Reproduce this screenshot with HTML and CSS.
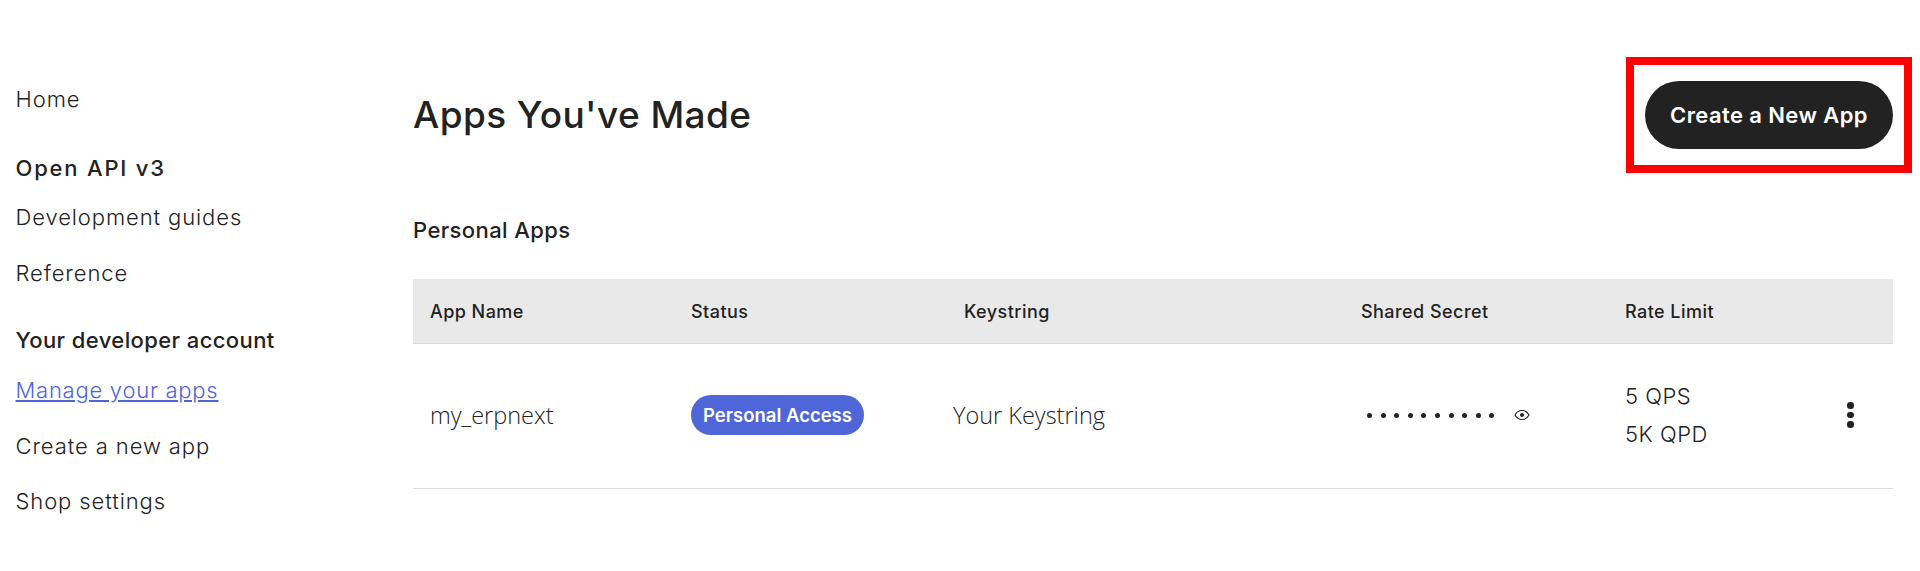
FILE: index.html
```html
<!DOCTYPE html>
<html lang="en">
<head>
    <meta charset="UTF-8">
    <title>Apps You've Made</title>
    <link rel="stylesheet" href="styles.css">
</head>
<body>

<div class="page">
    <!-- Sidebar -->
    <nav class="sidebar">
        <a href="#" class="nav-link nav-home">Home</a>
        <div class="nav-title nav-title-api">Open API v3</div>
        <a href="#" class="nav-link">Development guides</a>
        <a href="#" class="nav-link nav-last">Reference</a>
        <div class="nav-title">Your developer account</div>
        <a href="#" class="nav-link nav-active">Manage your apps</a>
        <a href="#" class="nav-link">Create a new app</a>
        <a href="#" class="nav-link">Shop settings</a>
    </nav>

    <main class="content">
        <div class="top-row">
            <h1>Apps You've Made</h1>
            <div class="highlight-box">
                <button class="create-btn">Create a New App</button>
            </div>
        </div>

        <h2>Personal Apps</h2>

        <div class="apps-table">
            <div class="table-head">
                <div class="col-name">App Name</div>
                <div class="col-status">Status</div>
                <div class="col-key">Keystring</div>
                <div class="col-secret">Shared Secret</div>
                <div class="col-rate">Rate Limit</div>
            </div>
            <div class="table-row">
                <div class="col-name">my_erpnext</div>
                <div class="col-status"><span class="badge">Personal Access</span></div>
                <div class="col-key key-value">Your Keystring</div>
                <div class="col-secret secret-cell">
                    <span class="secret-dots">
                        <i></i><i></i><i></i><i></i><i></i><i></i><i></i><i></i><i></i><i></i>
                    </span>
                    <svg class="eye" viewBox="0 0 16 16" width="16" height="16">
                        <path d="M1 8c1.600-3 4-4.500 7-4.500s5.400 1.500 7 4.500c-1.600 3-4 4.500-7 4.500S2.600 11 1 8z" fill="none" stroke="#222" stroke-width="1.200"/>
                        <circle cx="8" cy="8" r="2" fill="#222"/>
                    </svg>
                </div>
                <div class="col-rate rate-cell">
                    <div>5 QPS</div>
                    <div>5K QPD</div>
                </div>
                <div class="col-more">
                    <span class="more"><i></i><i></i><i></i></span>
                </div>
            </div>
        </div>
    </main>
</div>

</body>
</html>
```

FILE: styles.css
```css
body {
    margin: 0;
    background-color: #fff;
    color: #222;
    font-family: Inter, Arial, sans-serif;
}

.page {
    display: flex;
    height: 571px;
    overflow: hidden;
}

/* Sidebar */
.sidebar {
    width: 397px;
    padding: 85px 0 0 16px;
    margin-left: -0.500px;
    display: flex;
    flex-direction: column;
    align-items: flex-start;
}

.nav-link {
    color: #222;
    font-size: 22px;
    font-weight: 300;
    line-height: 28px;
    letter-spacing: 0.9px;
    text-decoration: none;
    margin-bottom: 27.500px;
}

.nav-home {
    margin-bottom: 41px;
}

.nav-last {
    margin-bottom: 39.500px;
}

.nav-title {
    color: #222;
    font-size: 22px;
    font-weight: 500;
    line-height: 28px;
    letter-spacing: 0.4px;
    margin-bottom: 22px;
}

.nav-title-api {
    letter-spacing: 1.800px;
    margin-bottom: 21px;
}

.nav-active {
    color: #4d65d9;
    letter-spacing: 0.75px;
    text-decoration: underline;
}

/* Main content */
.content {
    width: 1480px;
    margin-left: 0.500px;
}

.top-row {
    display: flex;
    justify-content: space-between;
    align-items: center;
    height: 115px;
    margin-top: 57px;
    margin-right: -19px;
}

h1 {
    margin: 0;
    font-size: 37px;
    font-weight: 500;
    letter-spacing: 0.4px;
}

.highlight-box {
    box-sizing: border-box;
    width: 286px;
    height: 116px;
    border: 8px solid #f00;
    display: flex;
    align-items: center;
    justify-content: center;
}

.create-btn {
    width: 248px;
    height: 68px;
    border: none;
    border-radius: 34px;
    background-color: #222;
    color: #fff;
    font-family: Inter, Arial, sans-serif;
    font-size: 22px;
    font-weight: 600;
    letter-spacing: 0.4px;
}

h2 {
    margin: 44px 0 0;
    font-size: 22px;
    font-weight: 500;
    line-height: 28px;
    letter-spacing: 0.4px;
}

/* Table */
.apps-table {
    margin-top: 35px;
    border-bottom: 1px solid #ddd;
}

.table-head, .table-row {
    display: grid;
    grid-template-columns: 261px 273px 397px 264px 1fr 62px;
    padding-left: 17px;
}

.table-head {
    height: 64px;
    align-items: center;
    background-color: #e9e9ea;
    border-bottom: 1px solid #d9d9d9;
    font-size: 18px;
    font-weight: 500;
    letter-spacing: 0.45px;
}

.table-row {
    box-sizing: border-box;
    height: 144px;
    padding-bottom: 2px;
    align-items: center;
    font-family: "Open Sans", Arial, sans-serif;
    font-size: 23.500px;
    font-weight: 300;
    color: #222;
}

.key-value {
    margin-left: -11px;
}

.badge {
    display: inline-block;
    height: 40px;
    line-height: 40px;
    padding: 0 12px;
    border-radius: 20px;
    background-color: #4f66d8;
    color: #fff;
    font-family: Inter, Arial, sans-serif;
    font-size: 18.500px;
    font-weight: 600;
}

.secret-cell {
    display: flex;
    align-items: center;
    gap: 20px;
}

.secret-dots {
    display: flex;
    gap: 8.600px;
    margin-left: 6px;
}

.secret-dots i {
    width: 5px;
    height: 5px;
    border-radius: 50%;
    background-color: #222;
}

.rate-cell {
    font-family: Inter, Arial, sans-serif;
    font-size: 22px;
    font-weight: 300;
    line-height: 38px;
    letter-spacing: 0.5px;
}

.more {
    display: flex;
    flex-direction: column;
    align-items: center;
    gap: 3px;
    width: 8px;
    margin-left: 15.500px;
}

.more i {
    width: 6.500px;
    height: 6.500px;
    border-radius: 50%;
    background-color: #222;
}
```
